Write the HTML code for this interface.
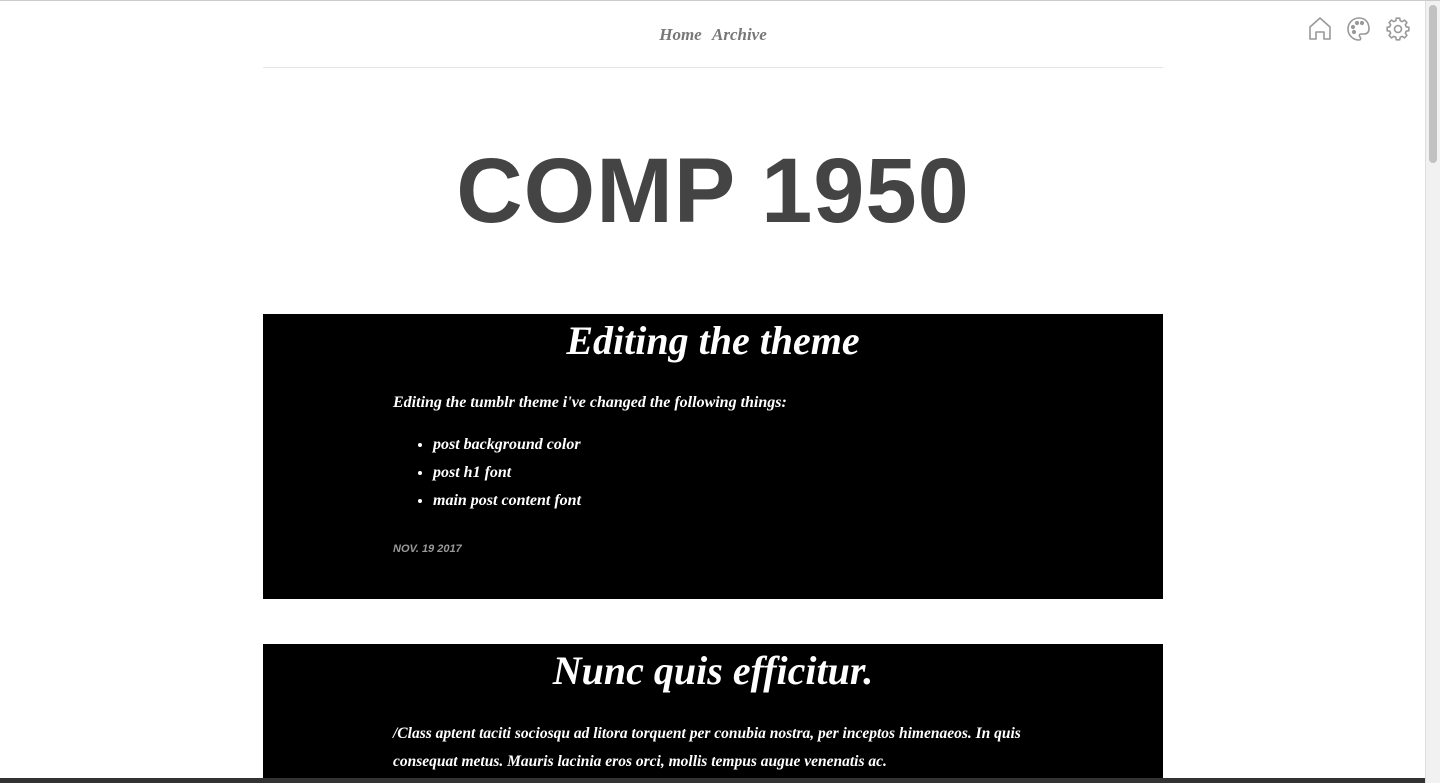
<!DOCTYPE html>
<html><head><style>
body{margin:0;width:1440px;height:782px;overflow:hidden;background:#fff;font-family:"Liberation Serif",serif;position:relative;border-top:1px solid #ccc;box-sizing:border-box}
.nav{position:absolute;top:24px;left:0;width:1426px;text-align:center;font-style:italic;font-weight:bold;font-size:17px;color:#777}
.nav span{margin:0 3px}
.hr{position:absolute;top:66px;left:263px;width:900px;height:1px;background:#e5e5e5}
.title{position:absolute;top:138px;left:0;width:1426px;text-align:center;font-family:"Liberation Sans",sans-serif;font-weight:bold;font-size:92px;color:#444;letter-spacing:1px}
.post{position:absolute;left:263px;width:900px;background:#000;color:#fff;font-style:italic;font-weight:bold}
.post h1{margin:0;text-align:center;font-size:40px;line-height:54px;font-family:"Liberation Serif",serif}
.body{padding:0 130px;font-size:16px}
ul{margin:19px 0 0;padding-left:40px}
li{line-height:28px}
.date{font-size:11px;color:#999;margin-top:28px;font-family:"Liberation Sans",sans-serif}
.sb{position:absolute;right:0;top:0;width:14px;height:782px;background:#f1f1f1;border-left:1px solid #ddd}
.sb div{position:absolute;left:3px;top:4px;width:8px;height:158px;background:#c1c1c1;border-radius:4px}
.icons{position:absolute;top:15px;left:1307px}
</style></head><body>
<div class="nav"><span>Home</span> <span>Archive</span></div>
<svg class="icons" width="105" height="28" fill="none" stroke="#999" stroke-width="1.6">
<path d="M3 23V11L13 2L23 11V23H17V16H9V23Z" stroke-linejoin="round"/>
<path d="M52 2a11 11 0 1 0 0 22c2 0 2-2 1-3s-1-3 1-3h3c3 0 5-2 5-5C62 6 58 2 52 2z"/>
<circle cx="46" cy="11" r="1.3" fill="#999"/><circle cx="50" cy="7" r="1.3" fill="#999"/><circle cx="55" cy="7" r="1.3" fill="#999"/><circle cx="47" cy="16" r="1.3" fill="#999"/>
<g transform="translate(91,13)" stroke-linejoin="round">
<circle r="3.5"/>
<polygon points="8.21,-2.2 10.86,-1.72 10.86,1.72 8.21,2.2 7.36,4.25 8.9,6.47 6.47,8.9 4.25,7.36 2.2,8.21 1.72,10.86 -1.72,10.86 -2.2,8.21 -4.25,7.36 -6.47,8.9 -8.9,6.47 -7.36,4.25 -8.21,2.2 -10.86,1.72 -10.86,-1.72 -8.21,-2.2 -7.36,-4.25 -8.9,-6.47 -6.47,-8.9 -4.25,-7.36 -2.2,-8.21 -1.72,-10.86 1.72,-10.86 2.2,-8.21 4.25,-7.36 6.47,-8.9 8.9,-6.47 7.36,-4.25"/>
</g>
</svg>
<div class="hr"></div>
<div class="title">COMP 1950</div>
<div class="post" style="top:313px;height:285px">
<h1>Editing the theme</h1>
<div class="body" style="margin-top:26px">Editing the tumblr theme i've changed the following things:
<ul><li>post background color</li><li>post h1 font</li><li>main post content font</li></ul>
<div class="date">NOV. 19 2017</div></div></div>
<div class="post" style="top:643px;height:135px">
<h1>Nunc quis efficitur.</h1>
<div class="body" style="margin-top:22px;line-height:28px;padding-right:120px;font-size:15.5px">/Class aptent taciti sociosqu ad litora torquent per conubia nostra, per inceptos himenaeos. In quis consequat metus. Mauris lacinia eros orci, mollis tempus augue venenatis ac.</div></div>
<div style="position:absolute;left:0;top:777px;width:1440px;height:5px;background:#333"></div>
<div class="sb"><div></div></div>
</body></html>
